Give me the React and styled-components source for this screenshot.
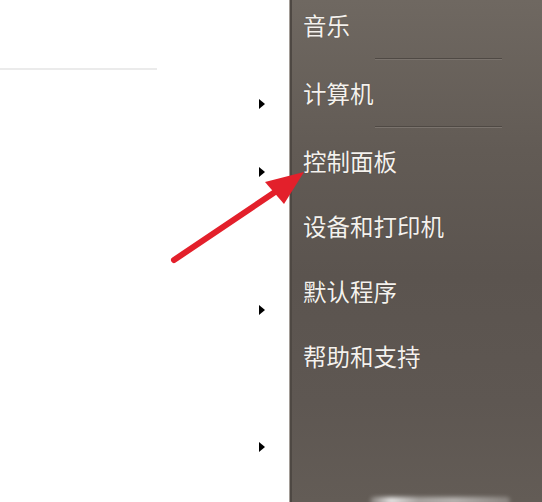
import React from "react";
import styled, { createGlobalStyle } from "styled-components";

const GlobalStyle = createGlobalStyle`
  html, body {
    margin: 0;
    padding: 0;
    background: #ffffff;
    overflow: hidden;
  }
  * {
    box-sizing: border-box;
  }
`;

const Screen = styled.div`
  position: relative;
  display: flex;
  width: 542px;
  height: 502px;
  overflow: hidden;
  font-family: "Noto Sans CJK SC", "Noto Sans", sans-serif;
`;

const LeftPane = styled.div`
  width: 289px;
  display: flex;
  flex-direction: column;
  background: #ffffff;
`;

const TopRule = styled.div`
  width: 157px;
  height: 2px;
  margin-top: 68px;
  background: #ebebeb;
`;

const LeftRow = styled.div`
  height: ${(p) => p.$h}px;
  display: flex;
  align-items: center;
  justify-content: flex-end;
  padding-right: 24px;
`;

const Caret = styled.span`
  width: 0;
  height: 0;
  border-top: 5px solid transparent;
  border-bottom: 5px solid transparent;
  border-left: 6px solid #000000;
  visibility: ${(p) => (p.$show ? "visible" : "hidden")};
`;

const Panel = styled.div`
  flex: 1;
  display: flex;
  flex-direction: column;
  border-left: 1px solid #a29c96;
  box-shadow: inset 2px 0 0 #4e4843;
  background: linear-gradient(
    180deg,
    #6f6861 0%,
    #625b55 30%,
    #5b544f 55%,
    #5e5752 80%,
    #635c56 100%
  );
`;

const Item = styled.div`
  height: ${(p) => p.$h}px;
  display: flex;
  align-items: center;
  padding-left: 13px;
  color: #f4f1ed;
  font-size: 23.5px;
  text-shadow: 0 0 1px rgba(0, 0, 0, 0.35);
`;

const Separator = styled.div`
  margin-left: 85px;
  width: 127px;
  height: 2px;
  border-top: 1px solid #4f4944;
  border-bottom: 1px solid #7a736d;
  margin-top: ${(p) => p.$top || 0}px;
`;

const BottomGlow = styled.div`
  margin-top: auto;
  margin-left: 80px;
  margin-bottom: -3px;
  height: 8px;
  width: 140px;
  border-radius: 4px;
  background: linear-gradient(
    90deg,
    rgba(255, 255, 255, 0.2),
    rgba(255, 255, 255, 0.85) 15%,
    rgba(255, 255, 255, 0.45) 35%,
    rgba(255, 255, 255, 0.55) 60%,
    rgba(255, 255, 255, 0.25)
  );
  filter: blur(2px);
`;

const Annotation = styled.svg`
  position: absolute;
  left: 0;
  top: 0;
  pointer-events: none;
`;

const leftRows = [
  { h: 68, show: true },
  { h: 68, show: true },
  { h: 69, show: false },
  { h: 69, show: true },
  { h: 68, show: false },
  { h: 69, show: true },
];

export default function App() {
  return (
    <>
      <GlobalStyle />
      <Screen>
        <LeftPane>
          <TopRule />
          {leftRows.map((r, i) => (
            <LeftRow key={i} $h={r.h}>
              <Caret $show={r.show} />
            </LeftRow>
          ))}
        </LeftPane>
        <Panel>
          <Item $h={50}>音乐</Item>
          <Separator $top={8} />
          <Item $h={66}>计算机</Item>
          <Separator />
          <Item $h={65}>控制面板</Item>
          <Item $h={65}>设备和打印机</Item>
          <Item $h={65}>默认程序</Item>
          <Item $h={65}>帮助和支持</Item>
          <BottomGlow />
        </Panel>
        <Annotation width="542" height="502" viewBox="0 0 542 502">
          <line
            x1="174"
            y1="260"
            x2="278"
            y2="190"
            stroke="#e3202b"
            strokeWidth="6"
            strokeLinecap="round"
          />
          <polygon points="304,172 265,182 284,204" fill="#e3202b" />
        </Annotation>
      </Screen>
    </>
  );
}
